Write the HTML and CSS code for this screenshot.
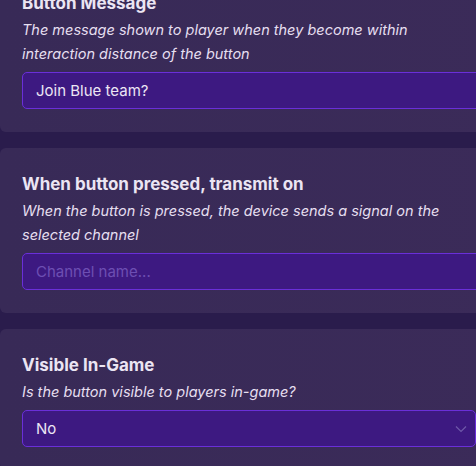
FILE: index.html
```html
<!DOCTYPE html>
<html lang="en">
<head>
    <meta charset="UTF-8">
    <title>Button settings</title>
    <link rel="stylesheet" href="styles.css">
</head>
<body>
    <!-- Lista de opciones del dispositivo -->
    <div class="options">
        <section class="option">
            <h3>Button Message</h3>
            <p class="hint">The message shown to player when they become within interaction distance of the button</p>
            <input type="text" class="field" value="Join Blue team?">
        </section>

        <section class="option">
            <h3>When button pressed, transmit on</h3>
            <p class="hint">When the button is pressed, the device sends a signal on the selected channel</p>
            <input type="text" class="field" placeholder="Channel name...">
        </section>

        <section class="option">
            <h3>Visible In-Game</h3>
            <p class="hint">Is the button visible to players in-game?</p>
            <div class="field select">
                <span>No</span>
                <svg class="chevron" width="12" height="8" viewBox="0 0 12 8"><path d="M1 1.5 L6 6.5 L11 1.5" fill="none" stroke="currentColor" stroke-width="1.2"/></svg>
            </div>
        </section>
    </div>
</body>
</html>
```

FILE: styles.css
```css
/* Fondo general */
body {
    background: #2a1c4c;
    font-family: Inter, "Noto Sans", sans-serif;
    color: #ece6f4;
    margin: 0;
    overflow: hidden;
}
/* Contenedor de opciones, desplazado como si la lista tuviera scroll */
.options {
    display: flex;
    flex-direction: column;
    gap: 16px;
    margin-top: -33px;
    width: 520px;
}
/* Tarjeta de cada opcion */
.option {
    background: linear-gradient(90deg, #382a57, #3b2b59);
    border-radius: 6px;
    padding: 25px 22px 23px 22px;
    display: flex;
    flex-direction: column;
}
/* Titulo */
h3 {
    margin: 0;
    font-size: 17px;
    line-height: 22px;
    font-weight: 700;
    color: #ebe5f3;
}
/* Descripcion en cursiva */
.hint {
    margin: 4px 0 6px 0;
    font-size: 14.5px;
    line-height: 24px;
    font-style: italic;
    color: #e6dff0;
    width: 440px;
}
/* Campos de entrada */
.field {
    box-sizing: border-box;
    height: 37px;
    background: #3d1981;
    border: 1px solid #6a2fd9;
    border-radius: 5px;
    padding: 0 13px;
    font-family: inherit;
    font-size: 15px;
    color: #ece6f4;
    outline: none;
}
.field::placeholder {
    color: #6d4fb3;
}
/* Selector desplegable */
.select {
    display: flex;
    align-items: center;
    justify-content: space-between;
    width: 454px;
}
.chevron {
    color: #6e58a9;
    margin-right: -5px;
}
```
